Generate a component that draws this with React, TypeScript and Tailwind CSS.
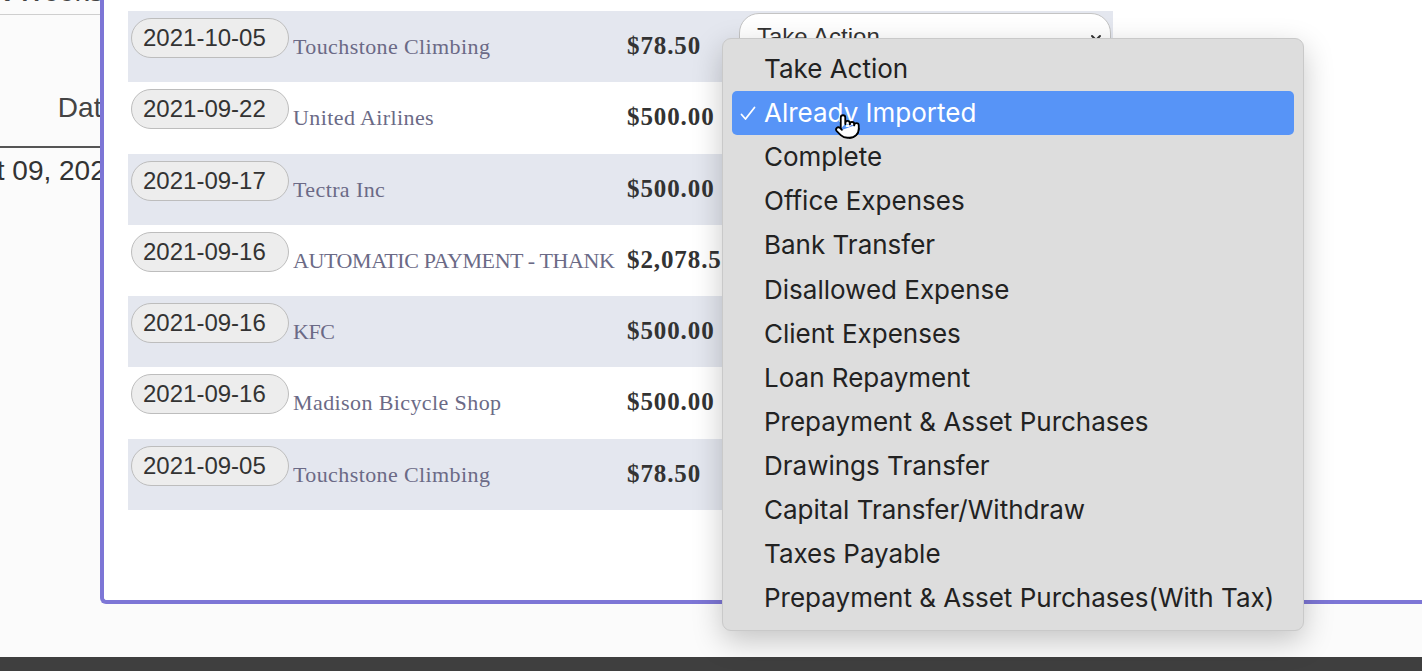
import React from 'react';
import { ChevronDown, Pointer } from 'lucide-react';

type Txn = { date: string; payee: string; amount: string };

const txns: Txn[] = [
  { date: '2021-10-05', payee: 'Touchstone Climbing', amount: '$78.50' },
  { date: '2021-09-22', payee: 'United Airlines', amount: '$500.00' },
  { date: '2021-09-17', payee: 'Tectra Inc', amount: '$500.00' },
  { date: '2021-09-16', payee: 'AUTOMATIC PAYMENT - THANK', amount: '$2,078.50' },
  { date: '2021-09-16', payee: 'KFC', amount: '$500.00' },
  { date: '2021-09-16', payee: 'Madison Bicycle Shop', amount: '$500.00' },
  { date: '2021-09-05', payee: 'Touchstone Climbing', amount: '$78.50' },
];

const actions = [
  'Take Action',
  'Already Imported',
  'Complete',
  'Office Expenses',
  'Bank Transfer',
  'Disallowed Expense',
  'Client Expenses',
  'Loan Repayment',
  'Prepayment & Asset Purchases',
  'Drawings Transfer',
  'Capital Transfer/Withdraw',
  'Taxes Payable',
  'Prepayment & Asset Purchases(With Tax)',
];

const sans = "font-['Liberation_Sans',Arial,sans-serif]";
const serif = "font-['Liberation_Serif','Times_New_Roman',serif]";

function LeftPanel() {
  return (
    <div className={`flex w-[100px] shrink-0 flex-col overflow-hidden text-[#444] ${sans}`}>
      <div className="flex h-[15px] flex-col border-b border-[#cfcfcf]">
        <div className="-mt-[22px] whitespace-nowrap pl-[2px] text-[28px] leading-[28px]">t Weeks</div>
      </div>
      <div className="flex h-[133px] items-start justify-end border-b-2 border-[#555] pt-[76px]">
        <span className="-mr-[17px] whitespace-nowrap text-[28px] font-medium leading-[34px]">Date</span>
      </div>
      <div className="-ml-[39px] mt-[6px] whitespace-nowrap text-[28px] leading-[34px] text-[#333]">Oct 09, 2021</div>
    </div>
  );
}

function Row({ t, shaded }: { t: Txn; shaded: boolean }) {
  const caps = t.payee === t.payee.toUpperCase();
  return (
    <div className={`flex h-[71.3px] w-[985px] items-start ${shaded ? 'bg-[#e4e7ef]' : 'bg-white'}`}>
      <div
        className={`ml-[3px] mt-[7px] h-[40px] w-[158px] shrink-0 rounded-full border border-[#bdbdbd] bg-[#ededed] pl-[11px] text-[24px] leading-[38px] text-[#333] ${sans}`}
      >
        {t.date}
      </div>
      <div
        className={`ml-[4px] mt-[22px] w-[330px] shrink-0 overflow-hidden whitespace-nowrap text-[22px] leading-[28px] text-[#6b6a86] ${
          caps ? 'tracking-[-0.4px]' : 'tracking-[0.4px]'
        } ${serif}`}
      >
        {t.payee}
      </div>
      <div className={`ml-[4px] mt-[20px] w-[112px] shrink-0 overflow-hidden whitespace-nowrap text-[25px] font-bold leading-[30px] tracking-[0.9px] text-[#333] ${serif}`}>
        {t.amount}
      </div>
      <div className={`mt-[2px] flex h-[50px] w-[372px] shrink-0 items-center justify-between rounded-[20px] border border-[#c4c4c4] bg-white pl-[17px] pr-[6px] text-[24px] text-[#333] ${sans}`}>
        <span className="-mt-[2px]">Take Action</span>
        <ChevronDown size={16} strokeWidth={3} className="text-[#333]" />
      </div>
    </div>
  );
}

function ActionMenu() {
  return (
    <div className="absolute left-[622px] top-[38px] w-[582px] rounded-[9px] border border-[#c9c9c9] bg-[#dddddd] px-[9px] pb-[10px] pt-[8px] shadow-[0_10px_30px_rgba(0,0,0,0.22)]">
      {actions.map((a) => {
        const active = a === 'Already Imported';
        return (
          <div
            key={a}
            className={`relative flex h-[44.1px] items-center rounded-[5px] pl-[32px] font-['Inter','Liberation_Sans',sans-serif] text-[26px] ${
              active ? 'bg-[#5794f7] text-white' : 'text-[#222]'
            }`}
          >
            {active && (
              <svg className="absolute left-[8px] top-[15px]" width="16" height="15" viewBox="0 0 16 15" fill="none">
                <path d="M1.5 8.5 L5.5 13 L14.5 1.5" stroke="white" strokeWidth="1.8" strokeLinecap="round" strokeLinejoin="round" />
              </svg>
            )}
            <span className="-mt-[1px]">{a}</span>
            {active && (
              <Pointer
                size={27}
                strokeWidth={1.6}
                fill="white"
                className="absolute left-[102px] top-[22px] text-black"
              />
            )}
          </div>
        );
      })}
    </div>
  );
}

export default function App() {
  return (
    <div className="flex h-[671px] w-[1422px] flex-col overflow-hidden bg-[#fbfbfb]">
      <div className="flex h-[657px]">
        <LeftPanel />
        <div className="relative flex-1">
          <div className="h-[604px] rounded-bl-[6px] border-b-4 border-l-4 border-[#7d76d6] bg-white pl-[24px] pt-[11px]">
            {txns.map((t, i) => (
              <Row key={i} t={t} shaded={i % 2 === 0} />
            ))}
          </div>
          <ActionMenu />
        </div>
      </div>
      <div className="h-[14px] bg-[#3f3f3f]" />
    </div>
  );
}
